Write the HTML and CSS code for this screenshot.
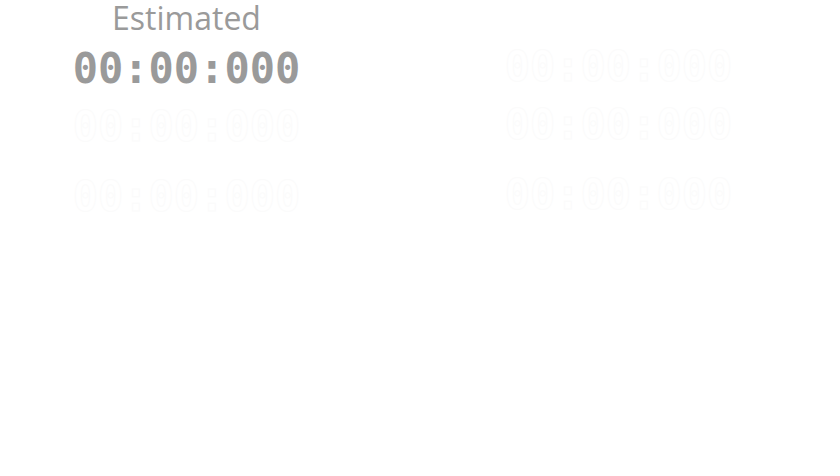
FILE: index.html
```html
<!DOCTYPE html>
<html>
<head>
<meta charset="utf-8">
<link rel="stylesheet" href="styles.css">
</head>
<body>
<div class="board">
  <div class="col col-left">
    <div class="block">
      <div class="label">Estimated</div>
      <div class="time main">00:00:000</div>
    </div>
    <div class="time ghost r2">00:00:000</div>
    <div class="time ghost r3">00:00:000</div>
  </div>
  <div class="col col-right">
    <div class="time ghost r1">00:00:000</div>
    <div class="time ghost r2">00:00:000</div>
    <div class="time ghost r3">00:00:000</div>
  </div>
</div>
</body>
</html>
```
FILE: styles.css
```css
html, body {
  margin: 0;
  padding: 0;
  background: #ffffff;
}
.board {
  display: flex;
  padding-left: 73px;
  gap: 205px;
}
.col {
  display: flex;
  flex-direction: column;
  align-items: center;
  width: 227px;
}
.block {
  display: flex;
  flex-direction: column;
  align-items: center;
}
.label {
  font-family: "Open Sans", "Noto Sans", sans-serif;
  font-size: 32px;
  line-height: 36px;
  color: #9a9a9a;
}
.time {
  font-family: "DejaVu Sans Mono", monospace;
  font-weight: bold;
  font-size: 42px;
  line-height: 48px;
  white-space: nowrap;
  color: #9a9a9a;
}
.main {
  margin-top: 9px;
}
.ghost {
  color: #ffffff;
  -webkit-text-stroke: 1px #fbfbfb;
}
.col-left .r2 { margin-top: 10px; }
.col-left .r3 { margin-top: 22px; }
.col-right .r1 { margin-top: 43px; }
.col-right .r2 { margin-top: 10px; }
.col-right .r3 { margin-top: 22px; }
```
